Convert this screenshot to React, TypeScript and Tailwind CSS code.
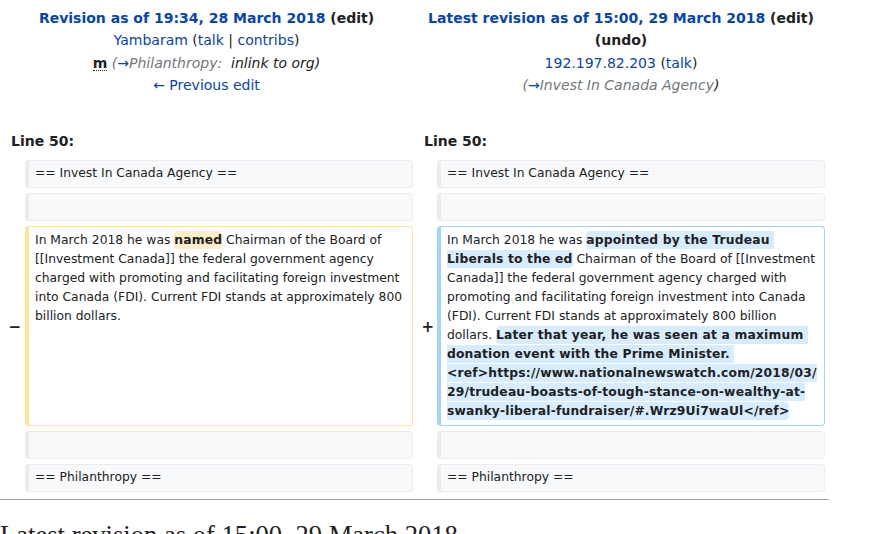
const link = "text-[#0645ad]";

function Context({ text }: { text: string }) {
  return (
    <div className="flex">
      <div className="w-[25px]" />
      <div className="w-[388px] h-[28px] flex items-center bg-[#f8f9fa] border border-[#eaecf0] border-l-4 rounded-[4px] pl-[6px] text-[12.32px] leading-[19px]">
        {text}
      </div>
      <div className="w-[24px]" />
      <div className="w-[388px] h-[28px] flex items-center bg-[#f8f9fa] border border-[#eaecf0] border-l-4 rounded-[4px] pl-[6px] text-[12.32px] leading-[19px]">
        {text}
      </div>
    </div>
  );
}

const del = "bg-[#feeec8] font-bold tracking-[0.17px] rounded-[4px] py-[2px]";
const add = "bg-[#d8ecff] font-bold tracking-[0.17px] rounded-[4px] py-[2px]";

export default function App() {
  return (
    <div className="w-[874px] h-[534px] overflow-hidden bg-white text-[#202122] font-['DejaVu_Sans',sans-serif]">
      <div className="w-[829px]">
        {/* revision headers */}
        <div className="grid grid-cols-[413px_416px] text-center text-[14px] leading-[22.4px] pt-[7px]">
          <div>
            <div className="font-bold">
              <span className={link}>Revision as of 19:34, 28 March 2018</span> (edit)
            </div>
            <div>
              <span className={link}>Yambaram</span> (<span className={link}>talk</span> |{" "}
              <span className={link}>contribs</span>)
            </div>
            <div>
              <span className="font-bold border-b border-dotted border-[#202122] leading-[14px] inline-block">m</span>{" "}
              <span className="italic whitespace-pre">
                <span className="text-[#72777d]">(</span>
                <span className={link}>→</span>
                <span className="text-[#72777d]">Philanthropy:</span>  inlink to org)
              </span>
            </div>
            <div className={link}>← Previous edit</div>
          </div>
          <div>
            <div className="font-bold">
              <span className={link}>Latest revision as of 15:00, 29 March 2018</span> (edit)
              <br />
              (undo)
            </div>
            <div>
              <span className={link}>192.197.82.203</span> (<span className={link}>talk</span>)
            </div>
            <div className="italic">
              <span className="text-[#72777d]">(</span>
              <span className={link}>→</span>
              <span className="text-[#72777d]">Invest In Canada Agency</span>)
            </div>
          </div>
        </div>

        {/* line numbers */}
        <div className="grid grid-cols-[413px_416px] mt-[33px] text-[14px] leading-[22px] font-bold">
          <div className="pl-[11px]">Line 50:</div>
          <div className="pl-[11px]">Line 50:</div>
        </div>

        <div className="flex flex-col gap-[5px] mt-[8px]">
          <Context text="== Invest In Canada Agency ==" />
          <Context text="" />
          <div className="flex">
            <div className="w-[25px] flex items-center justify-end pr-[4px] pt-[3px] font-bold text-[15px]">−</div>
            <div className="w-[388px] bg-white border border-[#ffe49c] border-l-4 rounded-[4px] pl-[6px] pr-[4px] py-[4px] text-[12.32px] leading-[19px] whitespace-pre-wrap break-words">
              In March 2018 he was <span className={del}>named</span> Chairman of the Board of [[Investment Canada]] the federal government agency charged with promoting and facilitating foreign investment into Canada (FDI). Current FDI stands at approximately 800 billion dollars.
            </div>
            <div className="w-[24px] flex items-center justify-end pr-[3px] pt-[3px] font-bold text-[15px]">+</div>
            <div className="w-[388px] bg-white border border-[#a3d3ff] border-l-4 rounded-[4px] pl-[6px] pr-[4px] py-[4px] text-[12.32px] leading-[19px] whitespace-pre-wrap break-words">
              In March 2018 he was <span className={add}>appointed by the Trudeau Liberals to the ed</span> Chairman of the Board of [[Investment Canada]] the federal government agency charged with promoting and facilitating foreign investment into Canada (FDI). Current FDI stands at approximately 800 billion dollars. <span className={add}>Later that year, he was seen at a maximum donation event with the Prime Minister. &lt;ref&gt;https://www.nationalnewswatch.com/2018/03/29/trudeau-boasts-of-tough-stance-on-wealthy-at-swanky-liberal-fundraiser/#.Wrz9Ui7waUl&lt;/ref&gt;</span>
            </div>
          </div>
          <Context text="" />
          <Context text="== Philanthropy ==" />
        </div>

        <div className="mt-[7px] h-px bg-[#a2a9b1]" />
      </div>
      <h2 className="mt-[18px] font-['Liberation_Serif',serif] text-[26.6px] leading-[1.3] font-normal">
        Latest revision as of 15:00, 29 March 2018
      </h2>
    </div>
  );
}
